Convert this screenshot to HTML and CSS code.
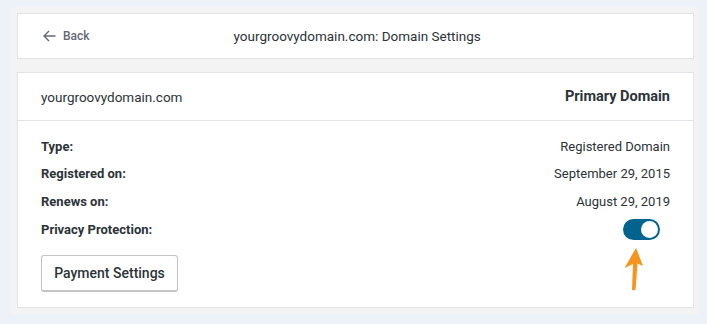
FILE: index.html
```html
<!DOCTYPE html>
<html lang="en">
<head>
    <meta charset="UTF-8">
    <meta name="viewport" content="width=device-width, initial-scale=1.0">
    <title>yourgroovydomain.com: Domain Settings</title>
    <link rel="stylesheet" href="styles.css">
</head>
<body>
    <div class="panel">
        <!-- Top bar -->
        <div class="card header-card">
            <a class="back-link" href="#">
                <svg width="13" height="12" viewBox="0 0 13 12"><path d="M6 1 L1 6 L6 11 M1 6 H12.5" fill="none" stroke="#646970" stroke-width="1.4"/></svg>
                Back
            </a>
            <div class="page-title">yourgroovydomain.com: Domain Settings</div>
        </div>

        <!-- Domain details -->
        <div class="card details-card">
            <div class="details-head">
                <span class="domain-name">yourgroovydomain.com</span>
                <span class="domain-kind">Primary Domain</span>
            </div>
            <div class="details-body">
                <div class="detail-row">
                    <span class="label">Type:</span>
                    <span class="value">Registered Domain</span>
                </div>
                <div class="detail-row">
                    <span class="label">Registered on:</span>
                    <span class="value">September 29, 2015</span>
                </div>
                <div class="detail-row">
                    <span class="label">Renews on:</span>
                    <span class="value">August 29, 2019</span>
                </div>
                <div class="detail-row">
                    <span class="label">Privacy Protection:</span>
                    <span class="toggle on"><span class="thumb"></span></span>
                </div>
                <button class="btn">Payment Settings</button>

                <!-- annotation arrow -->
                <svg class="pointer" width="24" height="46" viewBox="0 0 24 46">
                    <polygon points="14,2 21,20 15.5,17.5 13.5,44 10,44 11,18 2.5,22" fill="#f7941d"/>
                </svg>
            </div>
        </div>
    </div>
</body>
</html>
```

FILE: styles.css
```css
/* General */
body {
    margin: 0;
    background: #edf1f8;
    font-family: 'Roboto', 'Noto Sans', sans-serif;
    color: #2c3338;
    font-size: 13px;
}

.panel {
    margin: 7px 8px 10px 11px;
    background: #f3f3f4;
    padding: 6px 5px 6px 6px;
    display: flex;
    flex-direction: column;
    gap: 13px;
}

.card {
    background: white;
    border: 1px solid #e2e4e7;
}

/* Top bar */
.header-card {
    height: 44px;
    display: flex;
    align-items: center;
}

.back-link {
    display: flex;
    align-items: center;
    gap: 7px;
    margin-left: 25px;
    color: #646970;
    text-decoration: none;
    font-size: 12px;
    font-weight: 500;
}

.page-title {
    margin-left: 144px;
    font-size: 13.5px;
    color: #2c3338;
}

/* Details card */
.details-head {
    height: 47px;
    display: flex;
    align-items: center;
    justify-content: space-between;
    padding: 0 23px 0 23px;
    border-bottom: 1px solid #e2e4e7;
    font-size: 13.5px;
}

.domain-kind {
    font-weight: 700;
    font-size: 14.5px;
}

.details-body {
    position: relative;
    padding: 15px 23px 15px 23px;
    display: flex;
    flex-direction: column;
}

.detail-row {
    height: 20px;
    margin-bottom: 7.7px;
    display: flex;
    align-items: center;
    justify-content: space-between;
}

.label {
    font-weight: 700;
}

.value {
    color: #2c3338;
}

/* Toggle */
.toggle {
    width: 37px;
    height: 21px;
    border-radius: 11px;
    background: #00648e;
    margin-right: 10px;
    display: flex;
    align-items: center;
    justify-content: flex-end;
    box-sizing: border-box;
    padding-right: 2px;
}

.toggle .thumb {
    width: 17px;
    height: 17px;
    border-radius: 50%;
    background: white;
}

/* Button */
.btn {
    align-self: flex-start;
    margin-top: 8px;
    width: 137px;
    height: 37px;
    background: white;
    border: 1px solid #c3c4c7;
    border-bottom-width: 2px;
    border-radius: 3px;
    font-family: inherit;
    font-size: 14px;
    font-weight: 500;
    color: #2c3338;
}

.pointer {
    position: absolute;
    right: 47px;
    top: 125px;
}
```
